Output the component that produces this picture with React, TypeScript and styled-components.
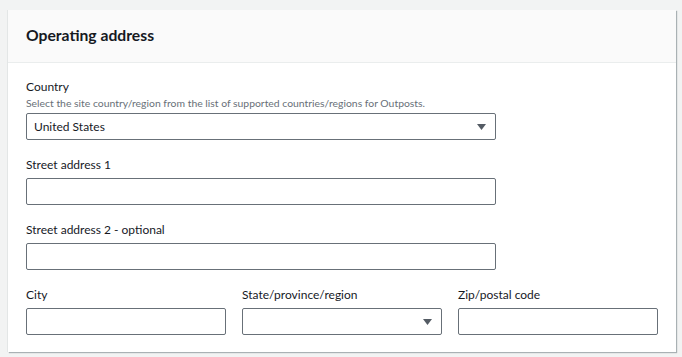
import React from 'react'
import styled, { createGlobalStyle } from 'styled-components'

const GlobalStyle = createGlobalStyle`
  * { box-sizing: border-box; }
  html, body { margin: 0; padding: 0; background: #f2f3f3; }
  body {
    font-family: Lato, "Open Sans", Arial, sans-serif;
    color: #16191f;
  }
`;

function Caret() {
  return (
    <svg width="9" height="6" viewBox="0 0 9 6">
      <path d="M0 0 H9 L4.5 6 Z" fill="#545b64" />
    </svg>
  )
}

export default function App() {
  return (
    <Page>
      <GlobalStyle />
      <Card>
        <CardHeader>
          <h2>Operating address</h2>
        </CardHeader>
        <CardBody>
          <Field $width={470}>
            <Label>Country</Label>
            <Description>Select the site country/region from the list of supported countries/regions for Outposts.</Description>
            <SelectBox>
              <span>United States</span>
              <Caret />
            </SelectBox>
          </Field>
          <Field $width={470}>
            <Label>Street address 1</Label>
            <InputBox />
          </Field>
          <Field $width={470}>
            <Label>Street address 2 - optional</Label>
            <InputBox />
          </Field>
          <Row>
            <Field $width={200}>
              <Label>City</Label>
              <InputBox />
            </Field>
            <Field $width={200}>
              <Label>State/province/region</Label>
              <SelectBox>
                <span />
                <Caret />
              </SelectBox>
            </Field>
            <Field $width={200}>
              <Label>Zip/postal code</Label>
              <InputBox />
            </Field>
          </Row>
        </CardBody>
      </Card>
    </Page>
  )
}

// styled components
const Page = styled.div`
  padding: 10px 6px 5px 8px;
`;

const Card = styled.section`
  width: 668px;
  background: #ffffff;
  box-shadow: 1px 1px 1px 0px rgba(0, 28, 36, 0.3), -1px 0px 0px 0px rgba(0, 28, 36, 0.06);
`;

const CardHeader = styled.div`
  height: 53px;
  display: flex;
  align-items: center;
  padding: 0 18px 2px;
  background: #fafafa;
  border-bottom: 1px solid #eaeded;

  & > h2 {
    margin: 0;
    font-size: 15.7px;
    font-weight: 700;
    color: #16191f;
  }
`;

const CardBody = styled.div`
  display: flex;
  flex-direction: column;
  gap: 15px;
  padding: 14px 18px 17px;
`;

const Field = styled.div<{ $width: number }>`
  display: flex;
  flex-direction: column;
  width: ${({ $width }) => $width}px;
`;

const Label = styled.label`
  font-size: 12px;
  line-height: 20px;
  color: #16191f;
  margin-bottom: 3px;
`;

const Description = styled.div`
  font-size: 10.4px;
  line-height: 14px;
  color: #687078;
  margin-top: -4px;
  margin-bottom: 3px;
  white-space: nowrap;
`;

const InputBox = styled.div`
  height: 27px;
  border: 1px solid #687078;
  border-radius: 2px;
  background: #ffffff;
`;

const SelectBox = styled(InputBox)`
  display: flex;
  align-items: center;
  justify-content: space-between;
  padding: 0 9px 0 7px;
  font-size: 12px;
  color: #16191f;
`;

const Row = styled.div`
  display: flex;
  gap: 16px;
`;
